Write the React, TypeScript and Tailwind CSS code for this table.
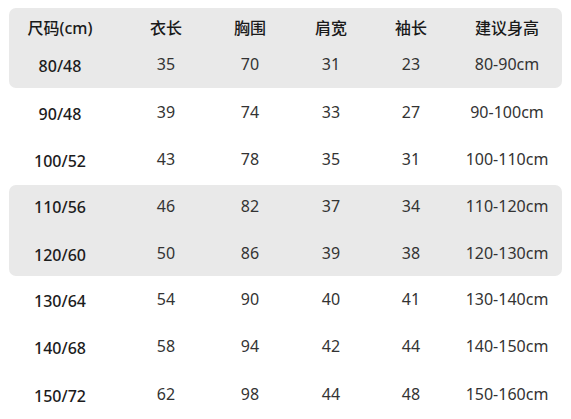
const HEADERS = ['尺码(cm)', '衣长', '胸围', '肩宽', '袖长', '建议身高'];

type Row = [string, number, number, number, number, string];

const ROWS: Row[] = [
  ['80/48', 35, 70, 31, 23, '80-90cm'],
  ['90/48', 39, 74, 33, 27, '90-100cm'],
  ['100/52', 43, 78, 35, 31, '100-110cm'],
  ['110/56', 46, 82, 37, 34, '110-120cm'],
  ['120/60', 50, 86, 39, 38, '120-130cm'],
  ['130/64', 54, 90, 40, 41, '130-140cm'],
  ['140/68', 58, 94, 42, 44, '140-150cm'],
  ['150/72', 62, 98, 44, 48, '150-160cm'],
];

// row heights / text nudges tuned to the reference
const ROW_CLASS = [
  'h-[40px] pb-[8px]',
  'h-[48px]',
  'h-[46px]',
  'h-[41px]',
  'h-[50px] pt-[4px]',
  'h-[46px]',
  'h-[48px]',
  'h-[48px]',
];

const GRID = 'grid grid-cols-[102px_110px_58px_104px_56px_1fr] items-center';

function DataRow({ row, className }: { row: Row; className: string }) {
  return (
    <div className={`${GRID} ${className}`}>
      <div className="text-center font-medium text-[#1c1c1c] pt-[3px]">{row[0]}</div>
      <div className="text-center">{row[1]}</div>
      <div className="text-center">{row[2]}</div>
      <div className="text-center">{row[3]}</div>
      <div className="text-center">{row[4]}</div>
      <div className="text-center pl-[13px]">{row[5]}</div>
    </div>
  );
}

export default function App() {
  return (
    <div
      className="w-[571px] h-[419px] bg-white pt-[8px] px-[9px] text-[16px] leading-none text-[#333]"
      style={{ fontFamily: '"Noto Sans", "Noto Sans CJK SC", sans-serif' }}
    >
      {/* header + first row */}
      <div className="rounded-[7px] bg-[#e9e9e9]">
        <div className={`${GRID} h-[40px] font-medium text-[#1a1a1a]`}>
          {HEADERS.map((h, i) => (
            <div key={h} className={`text-center ${i === 5 ? 'pl-[13px]' : ''}`}>
              {h}
            </div>
          ))}
        </div>
        <DataRow row={ROWS[0]} className={ROW_CLASS[0]} />
      </div>

      <DataRow row={ROWS[1]} className={ROW_CLASS[1]} />
      <DataRow row={ROWS[2]} className={ROW_CLASS[2]} />

      <div className="mt-[3px] rounded-[7px] bg-[#e9e9e9]">
        <DataRow row={ROWS[3]} className={ROW_CLASS[3]} />
        <DataRow row={ROWS[4]} className={ROW_CLASS[4]} />
      </div>

      {ROWS.slice(5).map((row, i) => (
        <DataRow key={row[0]} row={row} className={ROW_CLASS[i + 5]} />
      ))}
    </div>
  );
}
